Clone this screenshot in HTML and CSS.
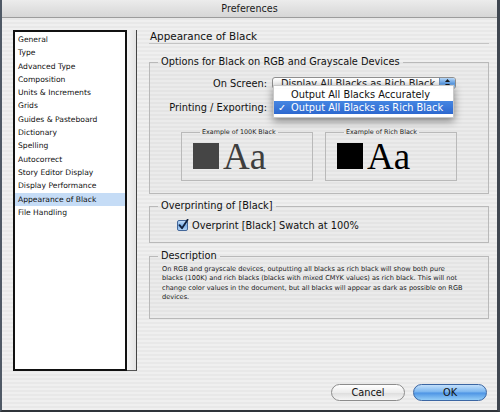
FILE: index.html
```html
<!DOCTYPE html>
<html>
<head>
<meta charset="utf-8">
<link rel="stylesheet" href="styles.css">
</head>
<body>
<div class="window">
  <div class="titlebar">Preferences</div>
  <div class="content">
    <div class="sidebar">
      <ul class="list">
        <li>General</li>
        <li>Type</li>
        <li>Advanced Type</li>
        <li>Composition</li>
        <li>Units &amp; Increments</li>
        <li>Grids</li>
        <li>Guides &amp; Pasteboard</li>
        <li>Dictionary</li>
        <li>Spelling</li>
        <li>Autocorrect</li>
        <li>Story Editor Display</li>
        <li>Display Performance</li>
        <li class="selected">Appearance of Black</li>
        <li>File Handling</li>
      </ul>
      <div class="scroll"></div>
    </div>
    <div class="panel">
      <div class="heading">Appearance of Black</div>
      <fieldset class="group g-options">
        <legend>Options for Black on RGB and Grayscale Devices</legend>
        <div class="row row-first">
          <span class="label">On Screen:</span>
          <div class="popup-wrap">
            <div class="popup">
              <span class="popup-text">Display All Blacks as Rich Black</span>
              <span class="arrows">
                <svg width="15" height="12" viewBox="0 0 15 12"><path d="M5 5 L7.5 2 L10 5 Z" fill="#1a1a1a"/><path d="M5 7 L7.5 10 L10 7 Z" fill="#1a1a1a"/></svg>
              </span>
            </div>
            <div class="menu">
              <div class="menu-item"><span class="check"></span>Output All Blacks Accurately</div>
              <div class="menu-item active"><span class="check">✓</span>Output All Blacks as Rich Black</div>
            </div>
          </div>
        </div>
        <div class="row row-second">
          <span class="label">Printing / Exporting:</span>
        </div>
        <div class="examples">
          <fieldset class="example">
            <legend>Example of 100K Black</legend>
            <div class="sample"><span class="swatch gray"></span><span class="aa gray-text">Aa</span></div>
          </fieldset>
          <fieldset class="example">
            <legend>Example of Rich Black</legend>
            <div class="sample"><span class="swatch black"></span><span class="aa">Aa</span></div>
          </fieldset>
        </div>
      </fieldset>
      <fieldset class="group g-overprint">
        <legend>Overprinting of [Black]</legend>
        <div class="check-row">
          <svg class="checkbox" width="12" height="12" viewBox="0 0 12 12">
            <defs>
              <linearGradient id="cb" x1="0" y1="0" x2="0" y2="1">
                <stop offset="0" stop-color="#c9e0f8"/>
                <stop offset="0.5" stop-color="#7fb2ea"/>
                <stop offset="1" stop-color="#b7d6f6"/>
              </linearGradient>
            </defs>
            <rect x="0.5" y="1.5" width="10" height="10" rx="1.5" fill="url(#cb)" stroke="#44679a"/>
            <path d="M2.5 6.2 L5 9.2 L10.6 0.8" fill="none" stroke="#10213f" stroke-width="1.8" stroke-linecap="round" stroke-linejoin="round"/>
          </svg>
          <span>Overprint [Black] Swatch at 100%</span>
        </div>
      </fieldset>
      <fieldset class="group g-desc">
        <legend>Description</legend>
        <p class="desc">On RGB and grayscale devices, outputting all blacks as rich black will show both pure<br>blacks (100K) and rich blacks (blacks with mixed CMYK values) as rich black. This will not<br>change color values in the document, but all blacks will appear as dark as possible on RGB<br>devices.</p>
      </fieldset>
    </div>
  </div>
  <div class="buttons">
    <div class="btn cancel">Cancel</div>
    <div class="btn ok">OK</div>
  </div>
</div>
</body>
</html>
```
FILE: styles.css
```css
html, body {
  margin: 0;
  padding: 0;
  background: #ffffff;
}
body {
  font-family: "DejaVu Sans", "Liberation Sans", sans-serif;
  color: #111;
}
.window {
  width: 500px;
  height: 412px;
  box-sizing: border-box;
  border-left: 2px solid #4f5966;
  border-right: 3px solid #3f4650;
  border-bottom: 2px solid #2f343a;
  background: repeating-linear-gradient(to bottom, #efefef 0, #efefef 2px, #e8e8e8 2px, #e8e8e8 4px);
  display: flex;
  flex-direction: column;
}
.titlebar {
  height: 17px;
  line-height: 17px;
  border-bottom: 1px solid #9c9c9c;
  background: linear-gradient(to bottom, #ececec, #d6d6d6);
  text-align: center;
  font-size: 9.6px;
  color: #1a1a1a;
}
.content {
  display: flex;
  padding-top: 12px;
  height: 341px;
}
.sidebar {
  margin-left: 11px;
  display: flex;
  height: 341px;
}
.list {
  list-style: none;
  margin: 0;
  padding: 0 0 0 2px;
  width: 108px;
  border: 2px solid #111;
  background: #fff;
  font-size: 7.6px;
  padding-top: 1px;
}
.list li {
  height: 13.3px;
  line-height: 13.3px;
  padding-left: 1px;
  white-space: nowrap;
  color: #111;
}
.list li.selected {
  background: #c5dcf6;
  margin-left: -2px;
  padding-left: 3px;
}
.scroll {
  width: 10px;
  background: linear-gradient(to right, #f4f4f4, #e4e4e4);
  border-right: 1px solid #444;
  border-bottom: 1px solid #555;
  box-sizing: border-box;
}
.panel {
  margin-left: 12px;
  width: 340px;
}
.heading {
  height: 13px;
  line-height: 13px;
  font-size: 10.4px;
  padding-left: 1px;
  border-bottom: 1px solid #c4c4c4;
  color: #111;
}
.group {
  margin: 0;
  padding: 0;
  border: 1px solid #b9b9b9;
  background: rgba(0, 0, 0, 0.015);
  min-width: 0;
}
.group > legend {
  font-size: 9.8px;
  line-height: 12px;
  padding: 0 3px;
  margin-left: 8px;
  color: #111;
}
.g-options {
  margin-top: 12px;
  padding-bottom: 12px;
}
.row {
  display: flex;
  align-items: center;
  height: 12px;
  font-size: 9.8px;
}
.row-first {
  margin-top: 9px;
}
.row-second {
  margin-top: 12px;
}
.label {
  width: 117px;
  text-align: right;
  white-space: nowrap;
}
.popup-wrap {
  position: relative;
  margin-left: 5px;
  width: 184px;
  height: 12px;
}
.popup {
  display: flex;
  height: 12px;
  box-sizing: border-box;
  border: 1px solid #8f8f8f;
  border-radius: 3px;
  background: linear-gradient(to bottom, #ffffff, #e8e8e8);
  overflow: hidden;
}
.popup-text {
  flex: 1;
  padding-left: 8px;
  font-size: 9.8px;
  line-height: 11px;
  white-space: nowrap;
  color: #222;
}
.arrows {
  width: 15px;
  background: linear-gradient(to bottom, #b6d6f6, #5f9ee6 55%, #9cc8f4);
  border-left: 1px solid #6d8fb8;
  display: flex;
  align-items: center;
  justify-content: center;
}
.menu {
  position: absolute;
  left: 1px;
  top: 8px;
  width: 181px;
  padding: 2px 0 3px;
  background: rgba(255, 255, 255, 0.97);
  border: 1px solid #c8c8c8;
  box-shadow: 0 3px 8px rgba(0, 0, 0, 0.45);
  box-sizing: border-box;
}
.menu-item {
  height: 13px;
  line-height: 13px;
  font-size: 9.8px;
  display: flex;
  white-space: nowrap;
  color: #111;
}
.menu-item.active {
  background: linear-gradient(to bottom, #4586e2, #2d68cf);
  color: #fff;
}
.check {
  width: 17px;
  padding-left: 4px;
  box-sizing: border-box;
  font-size: 9.5px;
}
.examples {
  display: flex;
  gap: 12px;
  margin-top: 15.5px;
  margin-left: 31px;
}
.example {
  margin: 0;
  padding: 0 0 8.5px 11px;
  width: 132px;
  box-sizing: border-box;
  border: 1px solid #b9b9b9;
  min-width: 0;
}
.example > legend {
  font-size: 6.4px;
  line-height: 7px;
  padding: 0 2px;
  margin-left: 7px;
  color: #222;
}
.sample {
  display: flex;
  align-items: baseline;
  margin-top: 6px;
}
.swatch {
  display: inline-block;
  width: 26px;
  height: 26px;
  margin-right: 4px;
}
.swatch.gray {
  background: #454545;
}
.swatch.black {
  background: #000;
}
.aa {
  font-family: "Liberation Serif", "Times New Roman", serif;
  font-size: 37px;
  line-height: 30px;
  color: #000;
}
.aa.gray-text {
  color: #3e3e3e;
}
.g-overprint {
  margin-top: 6px;
  padding-bottom: 11px;
}
.check-row {
  display: flex;
  align-items: center;
  height: 12px;
  margin-top: 7px;
  margin-left: 27px;
  font-size: 9.8px;
}
.checkbox {
  margin-right: 3px;
}
.g-desc {
  margin-top: 7px;
  padding-bottom: 16px;
}
.desc {
  margin: 3px 0 0 12px;
  font-size: 6.6px;
  line-height: 9.3px;
  white-space: nowrap;
  color: #1a1a1a;
}
.buttons {
  display: flex;
  justify-content: flex-end;
  gap: 8px;
  margin-top: 13px;
  padding-right: 10px;
}
.btn {
  width: 74px;
  height: 17px;
  box-sizing: border-box;
  border-radius: 9px;
  text-align: center;
  line-height: 15px;
  font-size: 9.8px;
  color: #111;
}
.cancel {
  border: 1px solid #8c8c8c;
  background: linear-gradient(to bottom, #ffffff, #ececec 50%, #dcdcdc 51%, #f6f6f6);
}
.ok {
  border: 1px solid #3b66a3;
  background: linear-gradient(to bottom, #c3e0fb, #78b4ef 48%, #4c93e4 52%, #93cdf7);
}
```
